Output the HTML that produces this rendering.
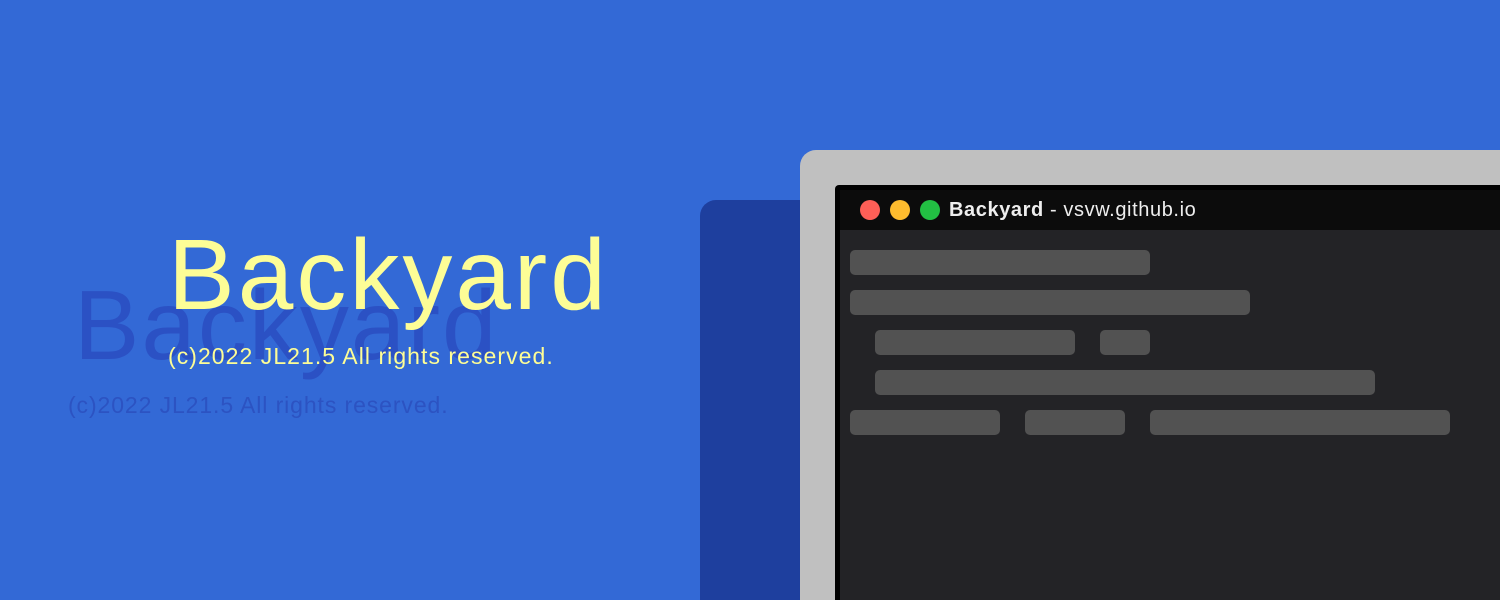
<!DOCTYPE html>
<html><head><style>
html,body{margin:0;width:1500px;height:600px;overflow:hidden}
body{background:#3369d6;position:relative;font-family:"Liberation Sans",sans-serif}
div{position:absolute}
.bar{background:#525252;height:25px;border-radius:5px}
.dot{width:20px;height:20px;border-radius:50%;top:200px}
.t{white-space:nowrap}
</style></head><body>
<div class="t" style="left:74px;top:270px;font-size:98px;line-height:110px;color:#2b51c4;letter-spacing:2px">Backyard</div>
<div class="t" style="left:68px;top:392px;font-size:23px;line-height:26px;color:#2c53c2;letter-spacing:0.9px">(c)2022 JL21.5 All rights reserved.</div>
<div class="t" style="left:168px;top:220px;font-size:100px;line-height:110px;color:#fdfd96;letter-spacing:3px">Backyard</div>
<div class="t" style="left:168px;top:343px;font-size:23px;line-height:26px;color:#fdfd96;letter-spacing:1.05px">(c)2022 JL21.5 All rights reserved.</div>
<div style="left:700px;top:200px;width:200px;height:420px;background:#1e3f9e;border-radius:16px"></div>
<div style="left:800px;top:150px;width:720px;height:470px;background:#c0c0c0;border-radius:16px"></div>
<div style="left:835px;top:185px;width:700px;height:430px;background:#000;border-radius:4px"></div>
<div style="left:840px;top:190px;width:680px;height:40px;background:#0c0c0c"></div>
<div style="left:840px;top:230px;width:680px;height:380px;background:#232326"></div>
<div class="dot" style="left:860px;background:#fe5f57"></div>
<div class="dot" style="left:890px;background:#febc2e"></div>
<div class="dot" style="left:920px;background:#22c043"></div>
<div class="t" style="left:949px;top:198px;font-size:20px;line-height:24px;color:#eee;letter-spacing:0.6px"><b>Backyard</b> - vsvw.github.io</div>
<div class="bar" style="left:850px;top:250px;width:300px"></div>
<div class="bar" style="left:850px;top:290px;width:400px"></div>
<div class="bar" style="left:875px;top:330px;width:200px"></div>
<div class="bar" style="left:1100px;top:330px;width:50px"></div>
<div class="bar" style="left:875px;top:370px;width:500px"></div>
<div class="bar" style="left:850px;top:410px;width:150px"></div>
<div class="bar" style="left:1025px;top:410px;width:100px"></div>
<div class="bar" style="left:1150px;top:410px;width:300px"></div>
</body></html>
